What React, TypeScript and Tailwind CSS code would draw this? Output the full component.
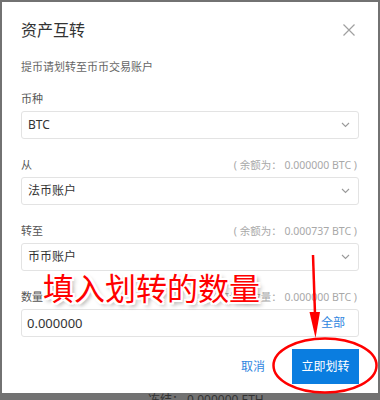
import React from "react";

const FONT = '"Noto Sans", "Noto Sans CJK SC", sans-serif';

function Chevron() {
  return (
    <svg width="9" height="6" viewBox="0 0 9 6" className="shrink-0">
      <path d="M1 1 L4.5 4.5 L8 1" fill="none" stroke="#9a9a9a" strokeWidth="1.1" />
    </svg>
  );
}

function Field({
  label,
  info,
  value,
}: {
  label: string;
  info?: string;
  value: string;
}) {
  return (
    <div className="flex flex-col">
      <div className="flex h-[16px] items-center justify-between">
        <span className="text-[11px] leading-[16px] text-[#555]">{label}</span>
        {info && <span className="pr-[2px] text-[10.5px] leading-[16px] text-[#a8a8a8]">{info}</span>}
      </div>
      <div className="mt-[4px] flex h-[28px] items-center justify-between rounded-[3px] border border-[#e3e3e3] pl-[6px] pr-[8px]">
        <span className="text-[12px] leading-[16px] text-[#333]">{value}</span>
        <Chevron />
      </div>
    </div>
  );
}

export default function App() {
  return (
    <div
      className="relative h-[400px] w-[380px] overflow-hidden bg-[#727272]"
      style={{ fontFamily: FONT }}
    >
      <div className="ml-[2px] mt-[2px] h-[391px] w-[376px] bg-white px-[19px] pt-[16px]">
        <div className="flex h-[24px] items-center justify-between">
          <span className="text-[16px] leading-[24px] text-[#333]">资产互转</span>
          <svg width="14" height="14" viewBox="0 0 14 14" className="mr-[3px]">
            <path d="M1.5 1.5 L12.5 12.5 M12.5 1.5 L1.5 12.5" stroke="#a0a0a0" strokeWidth="1.2" />
          </svg>
        </div>
        <div className="mt-[17px] text-[11px] leading-[16px] text-[#666]">提币请划转至币币交易账户</div>
        <div className="mt-[16px] flex flex-col gap-[18px]">
          <Field label="币种" value="BTC" />
          <Field label="从" info="( 余额为： 0.000000 BTC )" value="法币账户" />
          <Field label="转至" info="( 余额为： 0.000737 BTC )" value="币币账户" />
          <div className="flex flex-col">
            <div className="flex h-[16px] items-center justify-between">
              <span className="text-[11px] leading-[16px] text-[#555]">数量</span>
              <span className="pr-[2px] text-[10.5px] leading-[16px] text-[#a8a8a8]">( 可划转数量： 0.000000 BTC )</span>
            </div>
            <div className="mt-[4px] flex h-[28px] items-center justify-between rounded-[3px] border border-[#e3e3e3] pl-[5px] pr-[13px]">
              <span className="text-[13px] leading-[16px] text-[#333]">0.000000</span>
              <span className="text-[12px] leading-[16px] text-[#2f86e0]">全部</span>
            </div>
          </div>
        </div>
        <div className="mt-[12px] flex items-center justify-end gap-[27px]">
          <span className="text-[12px] leading-[16px] text-[#2f86e0]">取消</span>
          <div className="flex h-[35px] w-[67px] items-center justify-center bg-[#0a7de0] text-[12px] text-white">
            立即划转
          </div>
        </div>
      </div>
      <div className="pl-[148px] pt-[1px] text-[12px] leading-[12px] text-[#333]">冻结： 0.000000 ETH</div>

      {/* annotation text */}
      <div
        className="absolute left-[43px] top-[271px] whitespace-nowrap text-[31px] font-normal leading-[31px] text-[#ff0000] [text-shadow:2px_0_0_#fff,-2px_0_0_#fff,0_2px_0_#fff,0_-2px_0_#fff,2px_2px_0_#fff,-2px_-2px_0_#fff,2px_-2px_0_#fff,-2px_2px_0_#fff,3px_3px_4px_rgba(0,0,0,0.45)]"
        style={{ fontFamily: '"Noto Sans CJK SC", sans-serif' }}
      >
        填入划转的数量
      </div>

      {/* arrow and ellipse */}
      <svg className="pointer-events-none absolute left-0 top-0" width="380" height="400" viewBox="0 0 380 400">
        <path d="M313 255 L315 314" stroke="#ff0000" strokeWidth="2.5" fill="none" />
        <path d="M309.5 312 L320 312 L315.5 338 Z" fill="#ff0000" />
        <ellipse cx="325" cy="365.5" rx="51.5" ry="27" fill="none" stroke="#ff0000" strokeWidth="2.5" />
      </svg>
    </div>
  );
}
